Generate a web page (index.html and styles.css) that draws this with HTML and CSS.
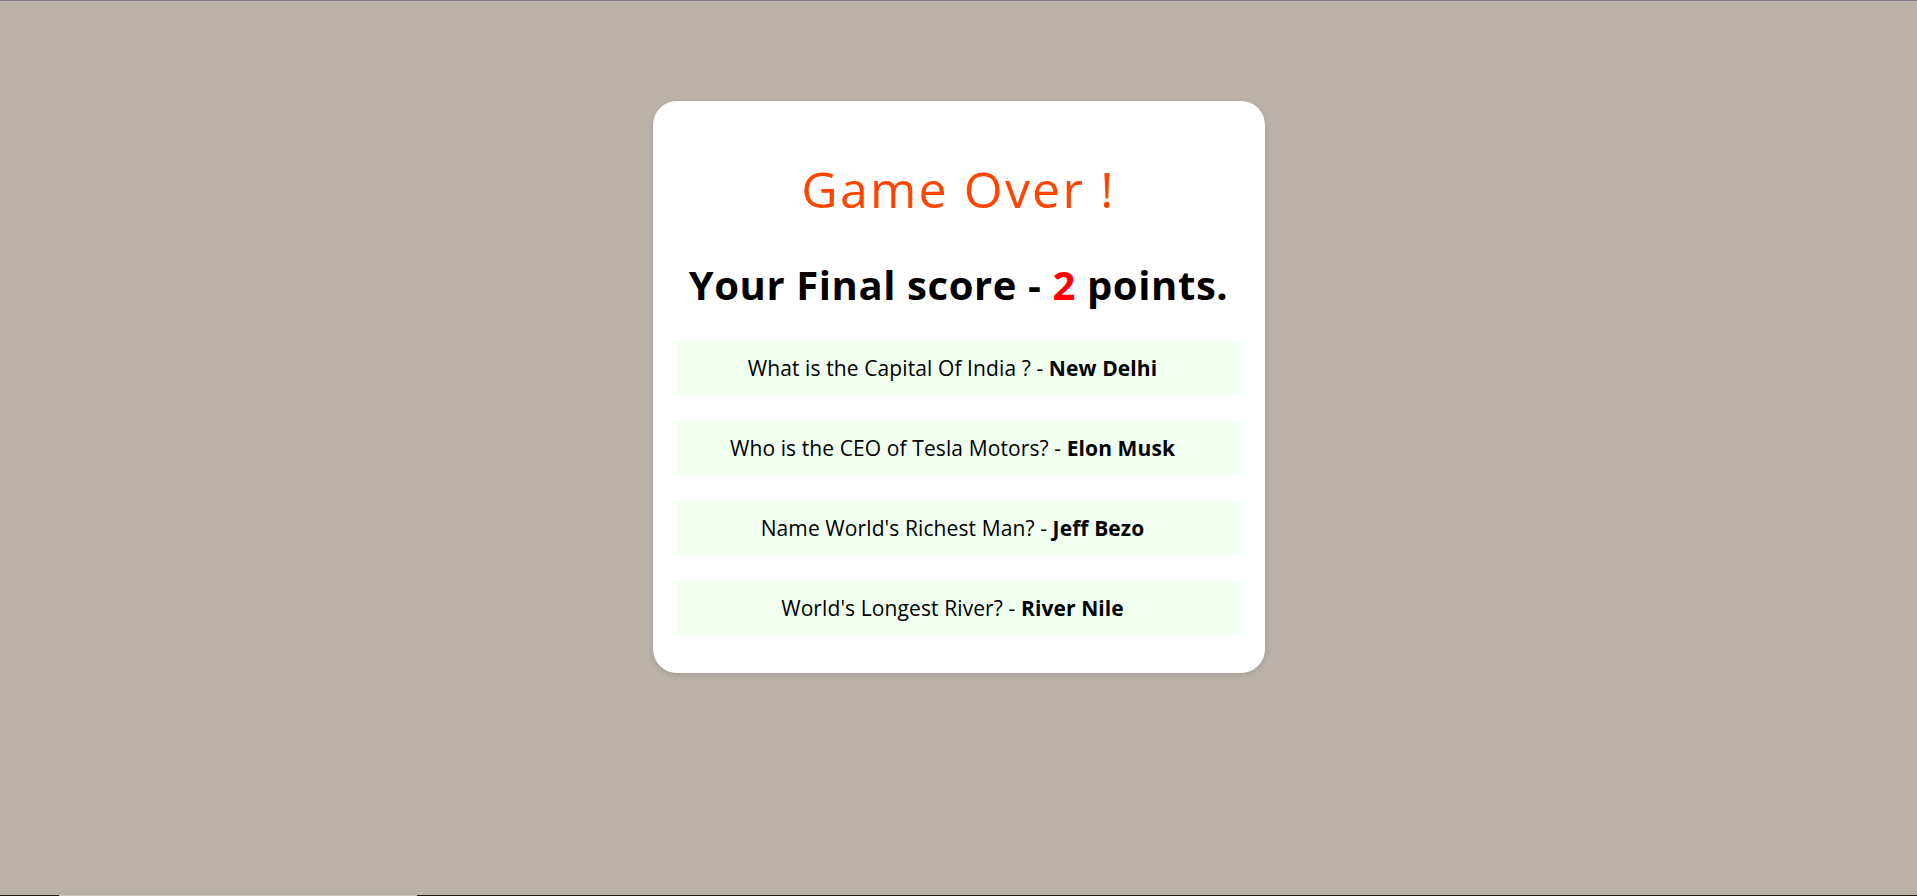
FILE: index.html
```html
<!DOCTYPE html>
<html lang="en">
<head>
<meta charset="utf-8">
<title>Quiz - Game Over</title>
<link rel="stylesheet" href="styles.css">
</head>
<body>
<div class="page">
  <div class="topline"></div>
  <main class="stage">
    <section class="card">
      <h1 class="title">Game Over !</h1>
      <h2 class="score">Your Final score - <span class="points">2</span> points.</h2>
      <ul class="answers">
        <li class="answer">What is the Capital Of India ? - <b>New Delhi</b></li>
        <li class="answer">Who is the CEO of Tesla Motors? - <b>Elon Musk</b></li>
        <li class="answer">Name World's Richest Man? - <b>Jeff Bezo</b></li>
        <li class="answer">World's Longest River? - <b>River Nile</b></li>
      </ul>
    </section>
  </main>
  <div class="bottomline"><span class="seg-dark seg-a"></span><span class="seg-light"></span><span class="seg-dark seg-b"></span></div>
</div>
</body>
</html>
```
FILE: styles.css
```css
html, body {
  margin: 0;
  padding: 0;
  height: 100%;
}
body {
  background: #bab2a9;
  font-family: "Open Sans", "Noto Sans", sans-serif;
  color: #000;
}
.page {
  display: flex;
  flex-direction: column;
  height: 100vh;
}
.topline {
  height: 1px;
  background: #877d86;
  flex: none;
}
.stage {
  flex: 1;
  display: flex;
  justify-content: center;
  align-items: flex-start;
}
.card {
  margin-top: 100px;
  width: 562px;
  padding: 58px 25px 38px;
  background: #fff;
  border-radius: 24px;
  box-shadow: 0 2px 6px rgba(0,0,0,0.12);
  text-align: center;
}
.title {
  margin: 0;
  font-size: 50px;
  line-height: 60px;
  font-weight: 400;
  letter-spacing: 2.2px;
  color: #ff4500;
}
.score {
  margin: 41px 0 31px;
  font-size: 40px;
  line-height: 50px;
  font-weight: 700;
  letter-spacing: 0.6px;
}
.points {
  color: #ff0000;
}
.answers {
  list-style: none;
  margin: 0;
  padding: 0;
  display: flex;
  flex-direction: column;
  gap: 26px;
}
.answer {
  background: #f0fff0;
  border-radius: 3px;
  padding: 12px 22px 12px 10px;
  font-size: 21px;
  line-height: 30px;
  letter-spacing: 0.1px;
}
.answer b {
  font-weight: 700;
}
.bottomline {
  height: 1px;
  flex: none;
  display: flex;
}
.seg-dark { background: #1e1e1e; }
.seg-a { width: 59px; }
.seg-light { width: 358px; background: #c9c5c1; }
.seg-b { flex: 1; }
```
